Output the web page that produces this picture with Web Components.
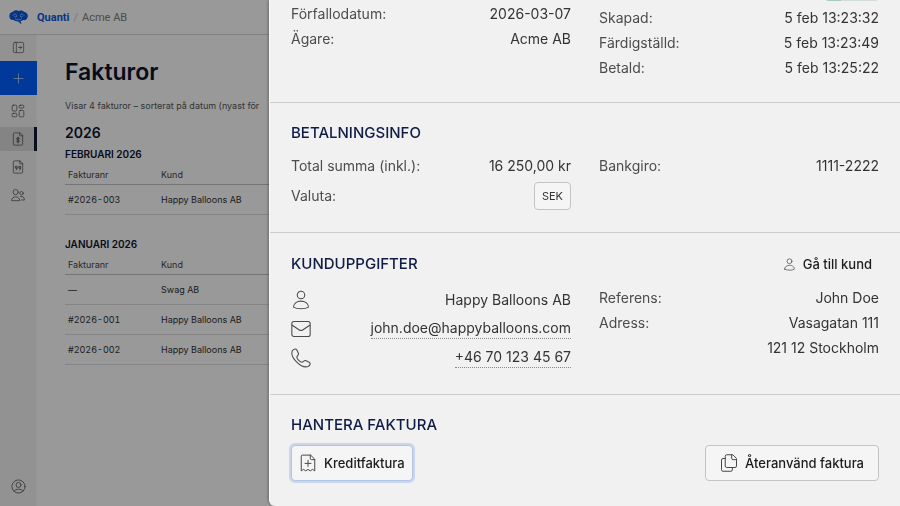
<!DOCTYPE html>
<html lang="sv">
<head>
<meta charset="utf-8">
<meta name="viewport" content="width=device-width, initial-scale=1">
<title>Fakturor - Quanti</title>
<style>
html,body{height:100%;margin:0}
body{font-family:Inter,"Liberation Sans",sans-serif;background:#fff;color:#333;overflow:hidden}
</style>
</head>
<body>
<app-shell>
<top-bar slot="top" company="Acme AB"></top-bar>
<side-menu slot="side"></side-menu>
<invoice-list></invoice-list>
</app-shell>

<side-drawer>
<drawer-section>
<info-column slot="left">
<info-row label="Förfallodatum:">2026-03-07</info-row>
<info-row label="Ägare:">Acme AB</info-row>
</info-column>
<info-column slot="right">
<status-pill></status-pill>
<info-row label="Skapad:">5 feb 13:23:32</info-row>
<info-row label="Färdigställd:">5 feb 13:23:49</info-row>
<info-row label="Betald:">5 feb 13:25:22</info-row>
</info-column>
</drawer-section>

<drawer-section heading="Betalningsinfo">
<info-column slot="left" gap>
<info-row label="Total summa (inkl.):">16 250,00 kr</info-row>
<info-row label="Valuta:"><value-tag>SEK</value-tag></info-row>
</info-column>
<info-column slot="right">
<info-row label="Bankgiro:">1111-2222</info-row>
</info-column>
</drawer-section>

<drawer-section heading="Kunduppgifter">
<action-button slot="action" icon="person" plain>Gå till kund</action-button>
<info-column slot="left">
<info-row icon="person">Happy Balloons AB</info-row>
<info-row icon="mail" href="mailto:john.doe@happyballoons.com">john.doe@happyballoons.com</info-row>
<info-row icon="phone" href="tel:+46701234567">+46 70 123 45 67</info-row>
</info-column>
<info-column slot="right">
<info-row label="Referens:">John Doe</info-row>
<info-row label="Adress:">Vasagatan 111</info-row>
<info-row>121 12 Stockholm</info-row>
</info-column>
</drawer-section>

<drawer-section heading="Hantera faktura">
<action-button slot="left" icon="credit" focused>Kreditfaktura</action-button>
<action-button slot="right" icon="copy">Återanvänd faktura</action-button>
</drawer-section>
</side-drawer>

<script>
// all icons share a 24x24 grid
const icons = {
expand: '<rect x="2.5" y="2.5" width="19" height="19" rx="3"/><path d="M8 2.5v19M12 12h6M15.5 9.5L18 12l-2.5 2.5"/>',
plus: '<path d="M12 2v20M2 12h20"/>',
grid: '<rect x="2" y="2" width="8" height="10" rx="2"/><rect x="14" y="2" width="8" height="5" rx="2"/><rect x="2" y="16" width="8" height="6" rx="2"/><rect x="14" y="11" width="8" height="11" rx="2"/>',
invoice: '<path d="M15 1.5H6a2 2 0 0 0-2 2v17a2 2 0 0 0 2 2h12a2 2 0 0 0 2-2v-14z"/><path d="M15 1.5v5h5"/><path stroke-width="1.7" d="M14.5 11c-1-1.3-5-1.3-5 .7 0 2.300 5 1.300 5 3.600 0 2-4 2-5 .7M12 9v10"/>',
quote: '<path d="M15 1.5H6a2 2 0 0 0-2 2v17a2 2 0 0 0 2 2h12a2 2 0 0 0 2-2v-14z"/><path d="M15 1.5v5h5"/><path stroke-width="1.5" d="M7.5 11.500v2.500h3v-2.500zM10.500 14l-1.500 3M13.500 11.500v2.500h3v-2.500zM16.500 14l-1.500 3"/>',
people: '<circle cx="8" cy="7" r="4.5"/><path d="M1 21c0-8 14-8 14 0z"/><circle cx="18" cy="9" r="3"/><path d="M16.5 14.5c4-1 6.5 2 6.5 6h-5"/>',
account: '<circle cx="12" cy="12" r="10.5"/><circle cx="12" cy="9.5" r="4"/><path d="M5 19.5c2-4.5 12-4.5 14 0"/>',
person: '<circle cx="12" cy="6" r="4.5"/><path d="M3 20.5c0-9.5 18-9.5 18 0-4 2.7-14 2.7-18 0z"/>',
mail: '<rect x="1" y="3" width="22" height="18" rx="2.5"/><path d="M1.5 7.5l8.5 5.7q2 1.3 4 0l8.5-5.7"/>',
phone: '<path d="M1.5 3.5C3.5.5 6 .5 7 2.500l2 4c.7 2-2 2.800-2 4.500 0 2 4 6 6 6 1.700 0 2.600-2.500 4.500-2l4.200 2c2.200 1.200 1.600 3.500-1.200 5.200C12.500 25-1.500 11.500 1.500 3.500z"/>',
credit: '<path d="M15 1.5H4.500q-1.500 0-1.500 1.500v19.500l3-2 3 2 3-2 3 2 3-2 3 2V7.500z"/><path d="M15 1.500v4.500q0 1.500 1.500 1.500H21M12 8.500v8M8 12.500h8"/>',
copy: '<path d="M16.5 1H9q-2 0-2 2v13q0 2 2 2h11q2 0 2-2V6.500z"/><path d="M15.500 1v4.500q0 2 2 2H22M7 6H4Q2 6 2 8v13q0 2 2 2h10.500q2 0 2-2v-3"/>'
};

function icon(name, size){
return `<svg width="${size}" height="${size}" viewBox="0 0 24 24" fill="none" stroke="currentColor" stroke-width="1.3" stroke-linejoin="round" stroke-linecap="round" aria-hidden="true">${icons[name]}</svg>`;
}


class AppShell extends HTMLElement{
constructor(){
super();
const shadow = this.attachShadow({mode:'open'});
shadow.innerHTML = `
<style>
:host{display:flex;flex-direction:column;height:100vh}
.body{display:flex;flex:1;min-height:0}
main{flex:1;min-width:0}
.backdrop{position:fixed;inset:0;background:rgba(0,0,0,.4)}
</style>
<slot name="top"></slot>
<div class="body"><slot name="side"></slot><main><slot></slot></main></div>
<div class="backdrop"></div>
`;
}
}


class TopBar extends HTMLElement{
constructor(){
super();
const shadow = this.attachShadow({mode:'open'});
shadow.innerHTML = `
<style>
:host{display:block;border-bottom:1px solid #d8d8d8}
header{display:flex;align-items:center;gap:4px;height:34px;padding-left:9px;font:11px Roboto,"Liberation Sans",sans-serif;color:#808080}
a{display:flex;align-items:center;gap:9px;color:#0a58e0;font-weight:700;text-decoration:none}
.sep{color:#ccc}
</style>
<header>
<a href="#"><svg width="19" height="15" viewBox="0 0 38 30" aria-hidden="true">
<path fill="currentColor" d="M7 4C11 0 16 0 19 2c4-2 9-1 12 2 5 1 8 6 6 11-1 4-5 6-9 5-2 2-4 2-5 2l2 7-8-7c-3 1-6 0-7-2C5 21 1 18 1 14 0 9 2 5 7 4z"/>
<path fill="none" stroke="#fff" stroke-opacity=".7" stroke-width="1.5" stroke-linecap="round" d="M8 11c2-4 6-4 7 0s-3 4-4 2M30 11c-2-4-6-4-7 0s3 4 4 2M13 18c4 2 8 2 12 0"/>
</svg>Quanti</a>
<span class="sep">/</span>
<span>${this.getAttribute('company') || ''}</span>
</header>
`;
}
}


class SideMenu extends HTMLElement{
constructor(){
super();
const shadow = this.attachShadow({mode:'open'});
shadow.innerHTML = `
<style>
:host{display:block;width:37px;background:#f3f3f3;border-right:1px solid #f9f9f9;box-sizing:border-box}
nav{display:flex;flex-direction:column;height:100%;box-sizing:border-box;padding-bottom:8px}
button,a{display:flex;align-items:center;justify-content:center;height:24px;margin:2px 0;padding:0;border:0;background:none;color:#555;box-sizing:border-box}
.toggle{margin:0 0 2px}
.add{height:34px;margin:0 -1px 2px 0;background:#0060ff;color:#fff}
.current{margin-right:-1px;background:#dcdcdc;border-right:3px solid #101a38;border-left:2px solid #dcdcdc}
.account{margin-top:auto;margin-bottom:0}
</style>
<nav aria-label="Huvudmeny">
<button class="toggle" aria-label="Visa meny">${icon('expand', 13)}</button>
<button class="add" aria-label="Ny">${icon('plus', 11)}</button>
<a href="#" aria-label="Översikt">${icon('grid', 14)}</a>
<a href="#" class="current" aria-current="page" aria-label="Fakturor">${icon('invoice', 14)}</a>
<a href="#" aria-label="Offerter">${icon('quote', 14)}</a>
<a href="#" aria-label="Kunder">${icon('people', 14)}</a>
<a href="#" class="account" aria-label="Konto">${icon('account', 15)}</a>
</nav>
`;
}
}


class InvoiceList extends HTMLElement{
constructor(){
super();
const months = [
{name:'Februari 2026', rows:[['#2026-003','Happy Balloons AB']]},
{name:'Januari 2026', rows:[['—','Swag AB'],['#2026-001','Happy Balloons AB'],['#2026-002','Happy Balloons AB']]}
];
const shadow = this.attachShadow({mode:'open'});
shadow.innerHTML = `
<style>
:host{display:block;padding:21px 28px;font-size:9px}
h1{margin:0;font-size:23px;line-height:32px;font-weight:600;color:#0c1430}
p{margin:10px 0 9px;line-height:16px;color:#555;white-space:nowrap}
h2{margin:0;font-size:14px;line-height:20px;font-weight:600;color:#0c1430}
h3{margin:3px 0 2px;font-size:10px;line-height:16px;font-weight:600;text-transform:uppercase;color:#0c1430}
table{width:100%;border-collapse:collapse;margin-bottom:21px;font-variant-numeric:tabular-nums}
th,td{height:29px;padding:0 3px;text-align:left;border-bottom:1px solid #dedede;font-weight:400}
th{height:20px;border-color:#c4c4c4;color:#444}
th:first-child{width:87px}
</style>
<h1>Fakturor</h1>
<p>Visar 4 fakturor – sorterat på datum (nyast för</p>
<h2>2026</h2>
${months.map(m => `
<h3>${m.name}</h3>
<table>
<thead><tr><th>Fakturanr</th><th>Kund</th></tr></thead>
<tbody>${m.rows.map(r => `<tr><td>${r[0]}</td><td>${r[1]}</td></tr>`).join('')}</tbody>
</table>`).join('')}
`;
}
}


class SideDrawer extends HTMLElement{
constructor(){
super();
const shadow = this.attachShadow({mode:'open'});
shadow.innerHTML = `
<style>
:host{display:block;position:fixed;top:0;right:0;bottom:0;width:70%;background:#f1f1f1;border-left:1px solid #fafafa;border-bottom-left-radius:6px;overflow:hidden;box-shadow:-1px 0 3px rgba(0,0,0,.3)}
</style>
<slot></slot>
`;
}
}


class DrawerSection extends HTMLElement{
constructor(){
super();
const heading = this.getAttribute('heading');
const shadow = this.attachShadow({mode:'open'});
shadow.innerHTML = `
<style>
:host{display:block;padding:${heading ? 17 : 1}px 21px 22px;border-bottom:1px solid #ccc}
:host(:last-of-type){border-bottom:0}
.head{display:flex;align-items:center;justify-content:space-between;min-height:26px;margin-bottom:7px}
h2{margin:0;font-size:15px;line-height:22px;font-weight:500;text-transform:uppercase;color:#101c44}
.cols{display:grid;grid-template-columns:1fr 1fr;gap:28px;align-items:start}
::slotted(action-button[slot="left"]){justify-self:start}
::slotted(action-button[slot="right"]){justify-self:end}
</style>
${heading ? `<div class="head"><h2>${heading}</h2><slot name="action"></slot></div>` : ''}
<div class="cols"><slot name="left"></slot><slot name="right"></slot></div>
`;
}
}


class InfoColumn extends HTMLElement{
constructor(){
super();
const shadow = this.attachShadow({mode:'open'});
shadow.innerHTML = `
<style>
:host{display:flex;flex-direction:column}
:host([gap]){gap:4px}
</style>
<slot></slot>
`;
}
}


class InfoRow extends HTMLElement{
constructor(){
super();
const name = this.getAttribute('icon');
const href = this.getAttribute('href');
const shadow = this.attachShadow({mode:'open'});
shadow.innerHTML = `
<style>
:host{display:flex;align-items:center;justify-content:space-between;min-height:25px;font-size:14px;line-height:20px}
:host([icon]){min-height:29px}
.label{display:flex;color:#4c4c4c}
a{color:inherit;text-decoration:none;border-bottom:1px dotted #888}
</style>
<span class="label">${name ? icon(name, 20) : this.getAttribute('label') || ''}</span>
${href ? `<a href="${href}"><slot></slot></a>` : '<span><slot></slot></span>'}
`;
}
}


class ValueTag extends HTMLElement{
constructor(){
super();
const shadow = this.attachShadow({mode:'open'});
shadow.innerHTML = `
<style>
:host{display:block;padding:3px 7px;border:1px solid #c4c4c4;border-radius:4px;background:#f5f5f5;font-size:11px;line-height:20px}
</style>
<slot></slot>
`;
}
}


class StatusPill extends HTMLElement{
constructor(){
super();
const shadow = this.attachShadow({mode:'open'});
// mostly scrolled out above the drawer
shadow.innerHTML = `
<style>
:host{display:block;align-self:flex-end;width:54px;height:20px;margin:-20px 0 4px;border-radius:4px;background:linear-gradient(90deg,#a9c9c0 30%,#d3dcd9 30%)}
</style>
`;
}
}


class ActionButton extends HTMLElement{
constructor(){
super();
const plain = this.hasAttribute('plain');
const shadow = this.attachShadow({mode:'open'});
shadow.innerHTML = `
<style>
:host{display:block}
button{display:flex;align-items:center;gap:7px;height:36px;padding:0 14px;border:1px solid #c4c4c4;border-radius:4px;background:#f5f5f5;color:#1c1c1c;font:500 13px/20px Inter,"Liberation Sans",sans-serif}
svg{color:#444}
:host([plain]) button{height:28px;padding:0 7px;border:0;background:none}
:host([focused]) button{padding:0 7px;border-color:#b4c4e4;box-shadow:0 0 0 2px #c9d6ee}
</style>
<button>${icon(this.getAttribute('icon'), plain ? 13 : 18)}<slot></slot></button>
`;
}
}


customElements.define('app-shell', AppShell);
customElements.define('top-bar', TopBar);
customElements.define('side-menu', SideMenu);
customElements.define('invoice-list', InvoiceList);
customElements.define('side-drawer', SideDrawer);
customElements.define('drawer-section', DrawerSection);
customElements.define('info-column', InfoColumn);
customElements.define('info-row', InfoRow);
customElements.define('value-tag', ValueTag);
customElements.define('status-pill', StatusPill);
customElements.define('action-button', ActionButton);
</script>
</body>
</html>
